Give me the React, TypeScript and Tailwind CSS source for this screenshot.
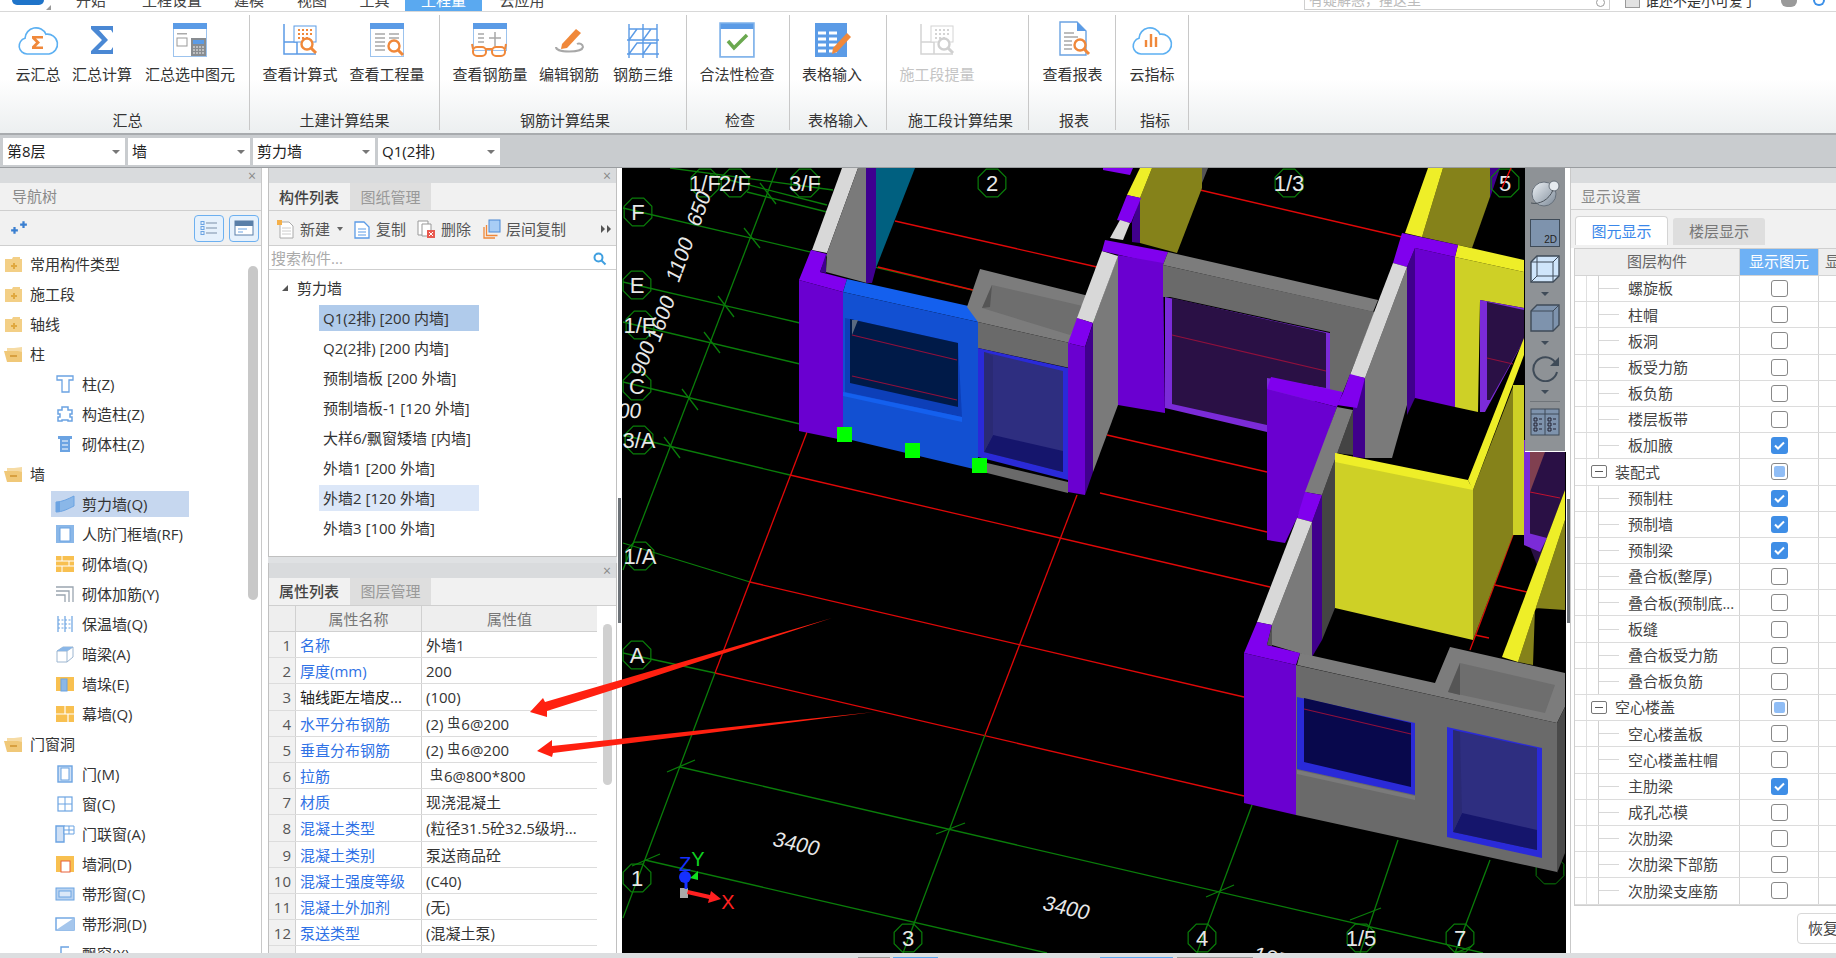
import type { ReactNode } from "react";

const BLUE = "#5b9be6";
const ORANGE = "#f0883a";

// ribbon icons, all in a 40x38 box
const Lens = ({ x, y, c = ORANGE }: { x: number; y: number; c?: string }) => (
  <g fill="none" stroke={c} strokeWidth="2.4">
    <circle cx={x} cy={y} r="5.5" fill="#fff" />
    <path d={`M${x + 4} ${y + 4}l5 5`} strokeWidth="3" />
  </g>
);

const Win = ({ h = 33 }: { h?: number }) => (
  <>
    <rect x="3.5" y="3.5" width="33" height={h} fill="#fff" stroke="#9cc3ee" />
    <rect x="3" y="3" width="34" height="6" fill={BLUE} />
  </>
);

const Cloud = ({ children }: { children?: ReactNode }) => (
  <svg width="42" height="38" viewBox="0 0 42 38">
    <path d="M10 34a8 8 0 0 1-2-15.700a11 11 0 0 1 21-4a9.500 9.500 0 0 1 3 19.700z" fill="none" stroke="#5cb0f2" strokeWidth="1.600" />
    {children}
  </svg>
);

const ribbonIcons: Record<string, ReactNode> = {
  cloudSum: (
    <Cloud>
      <path d="M15 16h11v2.500h-7l4 4-4 4h7v2.500h-11v-2.500l4-4-4-4z" fill={ORANGE} />
    </Cloud>
  ),
  sigma: (
    <svg width="40" height="38" viewBox="0 0 40 38">
      <path d="M9 6h22v7l-2-3H17l9 10-10 10h13l2-3v7H9v-3l11-11L9 9z" fill="#4a88d4" />
    </svg>
  ),
  winCalc: (
    <svg width="40" height="38" viewBox="0 0 40 38">
      <Win />
      <rect x="7" y="18" width="10" height="8" fill="none" stroke="#999" />
      <rect x="7" y="13" width="10" height="1.500" fill="#aaa" />
      <rect x="21" y="18" width="15" height="18" fill="#888c90" />
      <rect x="23" y="20" width="11" height="4" fill={BLUE} />
      <path d="M23 27h11M23 30h11M23 33h11" stroke="#eee" strokeDasharray="2 1" />
    </svg>
  ),
  calcFormula: (
    <svg width="40" height="38" viewBox="0 0 40 38">
      <path d="M4 4v30h32M4 22h13v12" fill="none" stroke={BLUE} strokeWidth="1.500" />
      <rect x="14" y="6" width="22" height="16" fill="#fff" stroke={BLUE} />
      <path d="M18 10h14M18 14h14M18 18h10" stroke={ORANGE} strokeWidth="2" strokeDasharray="2 2" />
      <Lens x={27} y={24} />
    </svg>
  ),
  qty: (
    <svg width="40" height="38" viewBox="0 0 40 38">
      <Win />
      <path d="M8 14h10M8 18h10M8 22h10M8 26h10M8 30h10M22 14h10M22 18h10" stroke="#a8a8a8" strokeWidth="1.500" />
      <Lens x={27} y={26} />
    </svg>
  ),
  glasses: (
    <svg width="40" height="38" viewBox="0 0 40 38">
      <Win h={27} />
      <path d="M8 14h6M8 18h6M8 22h6M25 12v14M19 18h12" stroke="#a8a8a8" strokeWidth="1.500" />
      <g fill="none" stroke={ORANGE} strokeWidth="2">
        <rect x="3" y="27" width="13" height="9" rx="4" />
        <rect x="22" y="27" width="13" height="9" rx="4" />
        <path d="M16 29h6M3 29l-1-5M35 29l1-5" />
      </g>
    </svg>
  ),
  edit: (
    <svg width="40" height="38" viewBox="0 0 40 38">
      <path d="M7 27c0 6 26 6 27 0a4 4 0 0 0-6-3" fill="none" stroke="#a8a8a8" strokeWidth="2" />
      <path d="M13 24l14-15 5 4-14 15-6 1z" fill={ORANGE} />
    </svg>
  ),
  rebar3d: (
    <svg width="40" height="38" viewBox="0 0 40 38">
      <g fill="none" stroke={BLUE} strokeWidth="1.400">
        <path d="M6 4v34M20 4v34M34 4v34M6 9l14 0 14 0M4 20h32M4 34h32M6 20l8-11M20 20l8-11M6 34l8-11h20M20 34l8-11" />
      </g>
    </svg>
  ),
  check: (
    <svg width="40" height="38" viewBox="0 0 40 38">
      <Win />
      <rect x="3" y="3" width="34" height="34" fill="none" stroke="#7fb2ea" strokeWidth="1.500" />
      <path d="M11 21l6 7 13-13" fill="none" stroke="#6aa84f" strokeWidth="3.500" />
    </svg>
  ),
  tablePen: (
    <svg width="40" height="38" viewBox="0 0 40 38">
      <rect x="3" y="3" width="32" height="34" fill={BLUE} />
      <path d="M6 13h8M17 13h8M6 19h8M17 19h8M6 25h8M17 25h8M6 31h8M17 31h8" stroke="#fff" strokeWidth="3" />
      <path d="M20 34l1-6 14-15 4 4-14 15z" fill={ORANGE} />
    </svg>
  ),
  disabled: (
    <svg width="40" height="38" viewBox="0 0 40 38">
      <path d="M4 4v30h32M4 22h13v12" fill="none" stroke="#d4d4d4" strokeWidth="1.500" />
      <rect x="14" y="6" width="22" height="16" fill="#fff" stroke="#d4d4d4" />
      <path d="M18 10h14M18 14h14M18 18h10" stroke="#d4d4d4" strokeWidth="2" strokeDasharray="2 2" />
      <Lens x={27} y={24} c="#d0d0d0" />
    </svg>
  ),
  report: (
    <svg width="40" height="38" viewBox="0 0 40 38">
      <path d="M7 2h17l9 9v24H7z" fill="#fff" stroke="#6ba3e2" strokeWidth="1.400" />
      <path d="M24 2l9 9h-9z" fill={BLUE} />
      <path d="M11 13h10M11 17h14M11 21h8M11 25h8M11 29h8" stroke="#a8a8a8" strokeWidth="1.400" />
      <Lens x={27} y={25} />
    </svg>
  ),
  cloudBars: (
    <Cloud>
      <path d="M15 20v7M20 14v13M25 17v10" stroke={ORANGE} strokeWidth="2.400" />
    </Cloud>
  ),
};

const ribbon = [
  { w: 250, pl: 8, lx: 6, label: "汇总", items: [["云汇总", 60, "cloudSum"], ["汇总计算", 68, "sigma"], ["汇总选中图元", 108, "winCalc"]] },
  { w: 190, pl: 4, lx: 0, label: "土建计算结果", items: [["查看计算式", 92, "calcFormula"], ["查看工程量", 82, "qty"]] },
  { w: 247, pl: 8, lx: 4, label: "钢筋计算结果", items: [["查看钢筋量", 84, "glasses"], ["编辑钢筋", 74, "edit"], ["钢筋三维", 74, "rebar3d"]] },
  { w: 103, pl: 0, lx: 4, label: "检查", items: [["合法性检查", 100, "check"]] },
  { w: 97, pl: 0, lx: 0, label: "表格输入", items: [["表格输入", 84, "tablePen"]] },
  { w: 142, pl: 0, lx: 6, label: "施工段计算结果", items: [["施工段提量", 100, "disabled"]] },
  { w: 87, pl: 0, lx: 4, label: "报表", items: [["查看报表", 87, "report"]] },
  { w: 73, pl: 0, lx: 6, label: "指标", items: [["云指标", 72, "cloudBars"]] },
] as { w: number; pl: number; lx: number; label: string; items: [string, number, string][] }[];

const tabs: [string, number][] = [
  ["开始", 70],
  ["工程设置", 92],
  ["建模", 62],
  ["视图", 64],
  ["工具", 61],
  ["工程量", 77],
  ["云应用", 80],
];

const TopBar = () => (
  <div className="flex h-[12px] shrink-0 overflow-hidden border-b border-[#d8d8d8] bg-white text-[15px] leading-none text-[#444]">
    <div className="relative h-full w-[56px] shrink-0">
      <div className="ml-[12px] h-[5px] w-[32px] rounded-b-[6px] bg-[#1f74c9]" />
      <div className="absolute bottom-[1px] right-[5px] h-0 w-0 border-b-[5px] border-l-[5px] border-b-[#999] border-l-transparent" />
    </div>
    {tabs.map(([t, w]) => (
      <div
        key={t}
        style={{ width: w }}
        className={`flex h-full shrink-0 items-end justify-center pb-[3px] ${t === "工程量" ? "bg-[#5aa9f0] text-white" : ""}`}
      >
        <span className="whitespace-nowrap">{t}</span>
      </div>
    ))}
    <div className="ml-[742px] flex h-[10px] w-[306px] shrink-0 items-end justify-between border border-t-0 border-[#cfcfcf] px-[4px] pb-[2px] text-[14px] text-[#bbb]">
      <span>有疑解惑，撞这里</span>
      <span className="h-[9px] w-[9px] rounded-full border border-[#999]" />
    </div>
    <div className="ml-[15px] h-[8px] w-[15px] shrink-0 border border-t-0 border-[#9a9a9a] bg-[#e2e2e2]" />
    <div className="ml-[5px] flex h-full w-[116px] shrink-0 items-end pb-[3px] text-[14px] text-[#333]">
      <span className="whitespace-nowrap">谁还不是小可爱了</span>
    </div>
    <div className="ml-[20px] h-[7px] w-[16px] shrink-0 rounded-b-[6px] bg-[#9a9a9a]" />
    <div className="ml-[16px] h-[6px] w-[12px] shrink-0 rounded-b-full border-[2px] border-t-0 border-[#3a8fe8]" />
  </div>
);

const Ribbon = () => (
  <div className="flex h-[123px] shrink-0 border-b-[2px] border-[#a8abae] bg-gradient-to-b from-white from-55% to-[#eceff0]">
    {ribbon.map((g) => (
      <div
        key={g.label}
        style={{ width: g.w, paddingLeft: g.pl }}
        className="mt-[3px] flex h-[115px] shrink-0 flex-col justify-between border-r border-[#c8c8c8]"
      >
        <div className="flex pt-[5px]">
          {g.items.map(([t, w, icon]) => (
            <div key={t} style={{ width: w }} className="flex shrink-0 flex-col items-center">
              <div className="flex h-[38px] items-center justify-center">{ribbonIcons[icon]}</div>
              <div className={`mt-[6px] whitespace-nowrap text-[15px] leading-[20px] ${icon === "disabled" ? "text-[#c4c4c4]" : "text-[#333]"}`}>{t}</div>
            </div>
          ))}
        </div>
        <div className="text-center text-[15px] leading-[19px] text-[#333]" style={{ marginLeft: -g.pl, paddingLeft: g.lx }}>
          {g.label}
        </div>
      </div>
    ))}
  </div>
);

const ComboBar = () => (
  <div className="flex h-[33px] shrink-0 items-start gap-[3px] border-b border-[#9a9da0] bg-[#c9cccf] pl-[3px] pt-[3px]">
    {["第8层", "墙", "剪力墙", "Q1(2排)"].map((t) => (
      <div key={t} className="flex h-[27px] w-[122px] items-center justify-between bg-white pl-[4px] pr-[5px] text-[15px] text-[#222]">
        <span>{t}</span>
        <span className="h-0 w-0 border-x-[4px] border-t-[4px] border-x-transparent border-t-[#777]" />
      </div>
    ))}
  </div>
);

const PanelClose = () => (
  <div className="flex h-[15px] shrink-0 items-center justify-end bg-[#d9dbdd] pr-[5px] text-[14px] leading-none text-[#888]">×</div>
);

// nav tree icons
const I = ({ children }: { children: ReactNode }) => (
  <svg width="20" height="20" viewBox="0 0 20 20" className="shrink-0">
    {children}
  </svg>
);
const L = "#6ba3e2";
const Y = "#f8c050";

const navIcons: Record<string, ReactNode> = {
  closed: (
    <I>
      <path d="M1 5h7l1-2h7v2h2v13H1z" fill="#f3cf86" />
      <path d="M9 9h2v2h2v2h-2v2H9v-2H7v-2h2z" fill="#e0a840" />
    </I>
  ),
  open: (
    <I>
      <path d="M3 4h7l8-1v13l-15 2z" fill="#f6dba4" />
      <path d="M0 7h14l4 1v10H3z" fill="#f0c878" />
      <rect x="6" y="11" width="7" height="2" fill="#d8a040" />
    </I>
  ),
  col: (
    <I>
      <path d="M2 2h16v4h-4v12H7V6H2z" fill="#fff" stroke={L} strokeWidth="1.300" />
    </I>
  ),
  gz: (
    <I>
      <path d="M7 3h6v3h4v4h-2v3h2v4h-4v-1H7v1H3v-4h2v-3H3V6h4z" fill="#fff" stroke={L} strokeWidth="1.500" />
    </I>
  ),
  brickCol: (
    <I>
      <path d="M3 2h14v3h-2v13H5V5H3z" fill={L} />
      <path d="M7 7h6M7 11h6M7 15h6" stroke="#fff" />
    </I>
  ),
  shear: (
    <I>
      <path d="M1 8c6 0 12-3 18-6v10c-6 3-12 6-18 6z" fill="#8ab7e8" stroke={L} />
      <path d="M1 8v10h4V8z" fill={L} />
    </I>
  ),
  rf: (
    <I>
      <rect x="1" y="1" width="18" height="18" fill="#8ab7e8" />
      <rect x="5" y="4" width="10" height="13" fill="#fff" stroke={L} />
    </I>
  ),
  brick: (
    <I>
      <rect x="1" y="2" width="18" height="16" fill={Y} />
      <path d="M1 7h18M1 12h18M7 2v5M14 7v5M7 12v6" stroke="#fff" />
    </I>
  ),
  rebar: (
    <I>
      <path d="M1 3h17v15M1 7h13v11M1 11h9v7" fill="none" stroke="#9aa5b0" strokeWidth="1.300" />
    </I>
  ),
  ins: (
    <I>
      <path d="M3 2v16M17 2v16M10 2v16" stroke={L} strokeWidth="1.200" />
      <path d="M3 6h14M3 10h14M3 14h14" stroke={L} strokeDasharray="2 1.500" />
    </I>
  ),
  beam: (
    <I>
      <path d="M2 7l6-4h10v10l-6 5H2z" fill="#fff" stroke="#9db6d0" />
      <path d="M2 7h10v11M12 7l6-4" fill="none" stroke="#9db6d0" />
      <path d="M8 3h10l-6 4H2z" fill="#8ab7e8" />
    </I>
  ),
  pier: (
    <I>
      <rect x="1" y="3" width="18" height="14" fill={Y} />
      <rect x="6" y="5" width="6" height="12" fill="#8ab7e8" stroke={L} />
    </I>
  ),
  curtain: (
    <I>
      <rect x="1" y="2" width="18" height="16" fill={Y} />
      <path d="M1 10h18M10 2v8M13 10v8" stroke="#fff" strokeWidth="1.200" />
    </I>
  ),
  door: (
    <I>
      <rect x="3" y="2" width="14" height="16" fill="#cfe0f5" stroke={L} strokeWidth="1.400" />
      <rect x="6" y="4" width="8" height="12" fill="#fff" stroke={L} />
    </I>
  ),
  window: (
    <I>
      <rect x="3" y="3" width="14" height="14" fill="#fff" stroke={L} strokeWidth="1.200" />
      <path d="M10 3v14M3 10h14" stroke={L} />
    </I>
  ),
  doorWin: (
    <I>
      <path d="M1 2h8v16H1z" fill="#cfe0f5" stroke={L} strokeWidth="1.400" />
      <path d="M9 2h10v8H9zM14 2v8M9 6h10" fill="#fff" stroke={L} />
    </I>
  ),
  hole: (
    <I>
      <rect x="1" y="2" width="18" height="16" fill={Y} />
      <rect x="6" y="7" width="9" height="11" fill="#fff" stroke="#e8603a" />
    </I>
  ),
  strip: (
    <I>
      <rect x="1" y="4" width="18" height="12" fill="#b8d2f0" stroke={L} />
      <rect x="4" y="7" width="12" height="6" fill="#dbe8f8" stroke={L} />
    </I>
  ),
  stripHole: (
    <I>
      <rect x="1" y="4" width="18" height="12" fill="#fff" stroke={L} strokeWidth="1.400" />
      <path d="M1 16L19 4v12z" fill="#a5c6ec" />
    </I>
  ),
  bay: (
    <I>
      <path d="M6 18V3h8" fill="none" stroke={L} strokeWidth="1.400" />
    </I>
  ),
};

const navItems: [string, string, boolean][] = [
  ["常用构件类型", "closed", false],
  ["施工段", "closed", false],
  ["轴线", "closed", false],
  ["柱", "open", false],
  ["柱(Z)", "col", true],
  ["构造柱(Z)", "gz", true],
  ["砌体柱(Z)", "brickCol", true],
  ["墙", "open", false],
  ["剪力墙(Q)", "shear", true],
  ["人防门框墙(RF)", "rf", true],
  ["砌体墙(Q)", "brick", true],
  ["砌体加筋(Y)", "rebar", true],
  ["保温墙(Q)", "ins", true],
  ["暗梁(A)", "beam", true],
  ["墙垛(E)", "pier", true],
  ["幕墙(Q)", "curtain", true],
  ["门窗洞", "open", false],
  ["门(M)", "door", true],
  ["窗(C)", "window", true],
  ["门联窗(A)", "doorWin", true],
  ["墙洞(D)", "hole", true],
  ["帯形窗(C)", "strip", true],
  ["帯形洞(D)", "stripHole", true],
  ["飘窗(X)", "bay", true],
];

const NavPanel = () => (
  <div className="flex h-full w-[262px] shrink-0 flex-col overflow-hidden border-r border-[#c9c9c9] bg-white">
    <PanelClose />
    <div className="flex h-[28px] shrink-0 items-center border-b border-[#cfcfcf] bg-[#f1f1f1] pl-[12px] text-[15px] text-[#8a8a8a]">导航树</div>
    <div className="flex h-[35px] shrink-0 items-center border-b border-[#cfcfcf] bg-[#f1f1f1] pl-[10px]">
      <svg width="18" height="16" viewBox="0 0 16 14">
        <path d="M3 6h2v2h2v2H5v2H3v-2H1V8h2zM11 1h2v2h2v2h-2v2h-2V5H9V3h2z" fill="#3a7fd0" />
      </svg>
      <div className="ml-auto mr-[2px] flex gap-[5px]">
        <div className="flex h-[27px] w-[30px] items-center justify-center rounded-[4px] border-[1.500px] border-[#6db0f0] bg-[#e6f1fc]">
          <svg width="18" height="16" viewBox="0 0 18 16">
            <path d="M6 3h11M6 8h11M6 13h11" stroke="#7b8fa8" />
            <rect x="1" y="1.500" width="3" height="3" fill="none" stroke="#6ba3e2" />
            <rect x="1" y="6.500" width="3" height="3" fill="none" stroke="#6ba3e2" />
            <rect x="1" y="11.500" width="3" height="3" fill="none" stroke="#6ba3e2" />
          </svg>
        </div>
        <div className="flex h-[27px] w-[30px] items-center justify-center rounded-[4px] border-[1.500px] border-[#6db0f0] bg-[#e6f1fc]">
          <svg width="20" height="16" viewBox="0 0 20 16">
            <rect x="1" y="1" width="18" height="14" fill="#fff" stroke="#5a7fa8" />
            <rect x="1" y="1" width="18" height="5" fill="#5a7fa8" />
            <path d="M4 9h9M4 12h5" stroke="#6ba3e2" />
          </svg>
        </div>
      </div>
    </div>
    <div className="relative min-h-0 flex-1 overflow-hidden pt-[3px]">
      {navItems.map(([t, icon, child]) =>
        child ? (
          <div key={t} className="flex h-[30px] items-center pl-[51px] text-[15px] text-[#333]">
            <div className={`flex h-[26px] w-[138px] items-center pl-[4px] ${t === "剪力墙(Q)" ? "bg-[#c6d7ef]" : ""}`}>
              {navIcons[icon]}
              <span className="ml-[7px] whitespace-nowrap">{t}</span>
            </div>
          </div>
        ) : (
          <div key={t} className="flex h-[30px] items-center pl-[4px] text-[15px] text-[#333]">
            {navIcons[icon]}
            <span className="ml-[6px]">{t}</span>
          </div>
        ),
      )}
      <div className="absolute left-[248px] top-[20px] h-[334px] w-[10px] rounded-full bg-[#c8c8c8]" />
    </div>
  </div>
);

const members = [
  "Q1(2排) [200 内墙]",
  "Q2(2排) [200 内墙]",
  "预制墙板 [200 外墙]",
  "预制墙板-1 [120 外墙]",
  "大样6/飘窗矮墙 [内墙]",
  "外墙1 [200 外墙]",
  "外墙2 [120 外墙]",
  "外墙3 [100 外墙]",
];

const PanelTabs = ({ active, other, low }: { active: string; other: string; low?: boolean }) => (
  <div className="flex h-[28px] shrink-0 items-end border-b border-[#cfcfcf] bg-[#f1f1f1]">
    <div className={`flex h-[27px] w-[80px] items-center justify-center text-[15px] font-medium text-[#444] ${low ? "pt-[2px]" : ""}`}>{active}</div>
    <div className={`ml-[1px] flex h-[27px] w-[81px] items-center justify-center bg-[#dedede] text-[15px] text-[#999] ${low ? "pt-[2px]" : ""}`}>{other}</div>
  </div>
);

const MemberPanel = () => (
  <div className="flex h-[389px] shrink-0 flex-col overflow-hidden border-x border-b border-[#c0c0c0] bg-white">
    <PanelClose />
    <PanelTabs active="构件列表" other="图纸管理" low />
    <div className="flex h-[35px] shrink-0 items-center border-b border-[#cfcfcf] bg-[#f1f1f1] pl-[8px] pt-[2px] text-[15px] text-[#555]">
      <svg width="18" height="20" viewBox="0 0 18 20">
        <path d="M3 3h9l4 4v12H3z" fill="#fff" stroke="#aaa" />
        <path d="M5 9h9M5 12h9M5 15h9" stroke="#ccc" />
        <rect x="0" y="1" width="5" height="5" fill="#f5b04a" />
      </svg>
      <span className="ml-[5px]">新建</span>
      <span className="ml-[7px] h-0 w-0 border-x-[3.500px] border-t-[4px] border-x-transparent border-t-[#666]" />
      <svg className="ml-[11px]" width="16" height="20" viewBox="0 0 16 20">
        <path d="M1 3h9l5 5v11H1z" fill="#fff" stroke="#5b9be6" strokeWidth="1.300" />
        <path d="M4 10h8M4 13h8M4 16h8" stroke="#5b9be6" />
      </svg>
      <span className="ml-[6px]">复制</span>
      <svg className="ml-[11px]" width="19" height="20" viewBox="0 0 19 20">
        <path d="M1 2h10v14H1z" fill="#fff" stroke="#999" />
        <path d="M5 5h9v12H5z" fill="#fff" stroke="#999" />
        <rect x="10" y="11" width="8" height="8" fill="#e85a50" />
        <path d="M12 13l4 4M16 13l-4 4" stroke="#fff" />
      </svg>
      <span className="ml-[5px]">删除</span>
      <svg className="ml-[12px]" width="18" height="20" viewBox="0 0 18 20">
        <path d="M1 8v11h11M3.500 6v10.500h11" fill="none" stroke={ORANGE} strokeWidth="1.300" />
        <rect x="6" y="1" width="11" height="12" fill="#a8cdf5" stroke="#4a88d4" />
      </svg>
      <span className="ml-[5px]">层间复制</span>
      <svg className="ml-auto mr-[5px]" width="10" height="8" viewBox="0 0 10 8">
        <path d="M0 0l4 4-4 4zM6 0l4 4-4 4z" fill="#555" />
      </svg>
    </div>
    <div className="flex h-[24px] shrink-0 items-center justify-between border-b border-[#cfcfcf] pl-[2px] pr-[9px] pt-[2px] text-[15px] text-[#aaa]">
      <span>搜索构件...</span>
      <svg width="14" height="14" viewBox="0 0 14 14">
        <circle cx="5.500" cy="5.500" r="4" fill="none" stroke="#3f9fe0" strokeWidth="2" />
        <path d="M8.500 8.500l4 4" stroke="#3f9fe0" strokeWidth="2" />
      </svg>
    </div>
    <div className="min-h-0 flex-1 pt-[3px] text-[15px] text-[#333]">
      <div className="flex h-[30px] items-center pl-[13px]">
        <span className="h-0 w-0 border-b-[6px] border-l-[6px] border-b-[#555] border-l-transparent" />
        <span className="ml-[9px]">剪力墙</span>
      </div>
      {members.map((m, i) => (
        <div key={m} className="flex h-[30px] items-center pl-[50px]">
          <div className={`flex h-[26px] w-[160px] items-center whitespace-nowrap pl-[4px] ${i === 0 ? "bg-[#b0cbeb]" : i === 6 ? "bg-[#dce7f8]" : ""}`}>{m}</div>
        </div>
      ))}
    </div>
  </div>
);

const Rebar = () => <span className="mr-[1px] align-[3px] text-[13px] leading-none">虫</span>;

const props: [string, ReactNode, boolean][] = [
  ["名称", "外墙1", true],
  ["厚度(mm)", "200", true],
  ["轴线距左墙皮...", "(100)", false],
  ["水平分布钢筋", <>(2) <Rebar />6@200</>, true],
  ["垂直分布钢筋", <>(2) <Rebar />6@200</>, true],
  ["拉筋", <>&nbsp;<Rebar />6@800*800</>, true],
  ["材质", "现浇混凝土", true],
  ["混凝土类型", "(粒径31.5砼32.5级坍...", true],
  ["混凝土类别", "泵送商品砼", true],
  ["混凝土强度等级", "(C40)", true],
  ["混凝土外加剂", "(无)", true],
  ["泵送类型", "(混凝土泵)", true],
  ["", "", false],
];

const PropPanel = () => (
  <div className="flex min-h-0 flex-1 flex-col overflow-hidden border-x border-[#c0c0c0] bg-white">
    <PanelClose />
    <PanelTabs active="属性列表" other="图层管理" />
    <div className="relative flex min-h-0 flex-1 overflow-hidden">
      <div className="w-[328px] shrink-0 text-[15px]">
        <div className="flex h-[26px] border-b border-[#d0d0d0] bg-[#eeeeee] text-[#777]">
          <div className="w-[27px] shrink-0 border-r border-[#d0d0d0]" />
          <div className="w-[126px] shrink-0 border-r border-[#d0d0d0] text-center leading-[26px]">属性名称</div>
          <div className="w-[175px] shrink-0 text-center leading-[26px]">属性值</div>
        </div>
        {props.map(([name, value, link], i) => (
          <div key={i} className="flex h-[26.200px] overflow-hidden border-b border-[#dcdcdc] leading-[27px]">
            <div className="w-[27px] shrink-0 border-r border-[#d0d0d0] bg-[#f1f1f1] pr-[4px] text-right text-[#555]">{name ? i + 1 : ""}</div>
            <div className={`w-[126px] shrink-0 truncate border-r border-[#d0d0d0] pl-[4px] ${link ? "text-[#2f72e6]" : "text-[#222]"}`}>{name}</div>
            <div className="w-[175px] shrink-0 whitespace-nowrap pl-[4px] text-[#333]">{value}</div>
          </div>
        ))}
      </div>
      <div className="absolute left-[334px] top-[18px] h-[161px] w-[9px] rounded-full bg-[#d0d0d0]" />
    </div>
  </div>
);

// 3D view, coordinates are page pixels
const polys: [string, string][] = [
  // far left wall
  ["812,250 827,253 858,168 842,168", "#d8d8d8"],
  ["826,272 867,283 867,168 858,168 827,253", "#7a7a7a"],
  ["866,168 876,168 876,268 872,283 866,283", "#3f0090"],
  ["876,168 915,168 876,268", "#006080"],
  // purple corner
  ["799,280 811,250 827,254 820,272 847,279 843,292", "#8000ee"],
  ["820,272 826,273 826,254", "#40008c"],
  ["799,280 843,292 843,440 799,431", "#6a00d0"],
  // selected blue wall
  ["847,279 982,309 978,322 843,292", "#1460ee"],
  ["843,292 978,322 978,470 843,438", "#1250d2"],
  ["845,318 958,343 962,417 845,392", "#0d3fb8"],
  ["850,319 958,343 958,407 850,383", "#001a48"],
  ["852,320 858,320 852,335", "#5a6a80"],
  ["843,392 962,417 962,422 843,396", "#1460ee"],
  // gray section
  ["967,307 980,269 1093,297 1070,343 978,322", "#7c7c7c"],
  ["982,308 992,285 1087,307 1070,335", "#6e6e6e"],
  ["982,308 992,285 990,307", "#555"],
  ["978,322 1070,343 1070,368 978,348", "#6a6a6a"],
  ["978,348 1068,368 1068,480 978,457", "#2a2ad8"],
  ["984,352 1063,371 1063,472 984,452", "#2e2e80"],
  ["993,435 1063,451 1063,472 984,452", "#15156c"],
  ["984,352 993,356 993,435 984,452", "#2a2a74"],
  ["987,463 1068,482 1068,493 987,473", "#6a6a6a"],
  // pillar and next wall
  ["1093,323 1118,255 1118,405 1093,472", "#7a7a7a"],
  ["1077,318 1093,323 1118,256 1102,251", "#d8d8d8"],
  ["1077,318 1093,323 1085,347 1068,343", "#8000ee"],
  ["1068,343 1085,347 1085,495 1068,492", "#6a00d0"],
  ["1085,347 1093,323 1093,472 1085,495", "#40008c"],
  // mid upper wall
  ["1103,168 1133,168 1130,175 1103,170", "#8000ee"],
  ["1140,198 1152,168 1202,168 1202,188 1177,253 1140,243", "#85821a"],
  ["1202,168 1208,168 1202,183", "#555"],
  ["1127,195 1140,168 1152,168 1140,198", "#eeee28"],
  ["1132,222 1140,198 1140,243 1132,242", "#40008c"],
  ["1117,220 1127,195 1141,198 1131,223", "#8000ee"],
  ["1110,238 1120,220 1130,223 1123,240", "#d8d8d8"],
  ["1105,240 1168,252 1163,265 1102,251", "#8000ee"],
  ["1118,255 1163,263 1165,413 1118,405", "#6a00d0"],
  ["1168,252 1378,300 1373,312 1163,265", "#7c7c7c"],
  ["1163,265 1375,312 1343,392 1330,392 1330,332 1170,297 1163,297", "#6a6a6a"],
  ["1165,297 1330,333 1330,392 1267,432 1165,408", "#7b2bd8"],
  ["1172,298 1326,333 1326,388 1267,378 1267,425 1172,404", "#2a1045"],
  // purple fin
  ["1271,377 1343,392 1337,407 1267,389", "#8000ee"],
  ["1267,389 1337,407 1307,493 1297,518 1285,543 1267,540", "#6a00d0"],
  // upper right
  ["1422,237 1443,168 1490,168 1490,197 1472,248", "#85821a"],
  ["1405,233 1428,168 1443,168 1422,237", "#eeee28"],
  ["1490,168 1500,168 1490,198", "#40008c"],
  ["1455,257 1524,272 1524,308 1480,300 1478,412 1455,407", "#ced026"],
  ["1480,300 1524,308 1524,340 1485,412 1480,412", "#7b2bd8"],
  ["1487,302 1524,310 1524,340 1490,400 1487,400", "#2a1045"],
  ["1458,245 1524,260 1524,272 1455,257", "#eeee28"],
  ["1415,248 1455,257 1455,407 1415,398", "#6a00d0"],
  ["1407,267 1415,248 1415,398 1407,415", "#40008c"],
  ["1402,233 1458,245 1455,257 1415,248 1407,267 1393,263", "#8000ee"],
  // long wall
  ["1365,378 1407,267 1407,405 1392,458 1365,458", "#7a7a7a"],
  ["1353,408 1365,378 1365,458 1353,457", "#40008c"],
  ["1350,375 1365,378 1407,267 1393,263", "#d8d8d8"],
  ["1343,393 1350,374 1365,378 1357,408 1337,405", "#8000ee"],
  ["1322,495 1353,410 1353,455 1335,453 1335,608 1322,640", "#444"],
  ["1337,407 1353,410 1322,495 1305,492", "#7c7c7c"],
  ["1312,522 1322,495 1322,640 1312,657", "#40008c"],
  ["1312,522 1312,657 1272,645 1272,625", "#7a7a7a"],
  ["1297,518 1305,492 1322,495 1312,522", "#8000ee"],
  ["1297,518 1312,522 1272,625 1257,622", "#d8d8d8"],
  // back right window under the toolbar
  ["1524,452 1565,452 1565,490 1537,565 1524,532", "#2a1045"],
  ["1524,532 1547,538 1540,552 1524,545", "#7b2bd8"],
  ["1529,452 1545,452 1530,492", "#804050"],
  // yellow walls
  ["1473,490 1513,387 1513,535 1473,640", "#85821a"],
  ["1513,385 1524,385 1524,535 1513,535", "#ced026"],
  ["1524,440 1530,440 1530,540 1524,540", "#7b2bd8"],
  ["1335,453 1473,485 1473,640 1335,608", "#ced026"],
  ["1335,453 1468,480 1473,490 1335,462", "#eeee28"],
  ["1468,480 1524,338 1524,355 1473,490", "#eeee28"],
  ["1518,662 1565,520 1565,610 1535,608 1533,665", "#85821a"],
  ["1502,657 1565,490 1565,520 1518,662", "#eeee28"],
  // bottom building
  ["1300,653 1435,683 1450,647 1565,673 1565,707 1557,723 1297,665", "#7c7c7c"],
  ["1448,692 1460,663 1555,685 1545,713", "#6e6e6e"],
  ["1448,692 1460,663 1460,695", "#555"],
  ["1296,665 1557,723 1557,872 1296,815", "#6a6a6a"],
  ["1557,723 1565,707 1565,853 1557,873", "#4a4a4a"],
  ["1297,697 1415,723 1415,795 1297,769", "#2a2ad8"],
  ["1304,698 1411,723 1411,787 1304,762", "#08084c"],
  ["1297,770 1415,796 1415,800 1297,774", "#7a7a7a"],
  ["1447,727 1542,748 1542,858 1447,837", "#2a2ad8"],
  ["1453,730 1537,748 1537,850 1453,832", "#2e2e80"],
  ["1462,813 1537,830 1537,850 1453,832", "#15156c"],
  ["1453,730 1460,732 1462,813 1453,832", "#2a2a74"],
  ["1244,653 1257,622 1272,625 1267,645 1300,653 1296,665", "#8000ee"],
  ["1267,645 1272,625 1272,646", "#555"],
  ["1244,653 1296,665 1296,815 1244,803", "#6a00d0"],
];

const green = "#0a7d0a";
const red = "#e00808";
const gridLines: [number, number, number, number, string][] = [
  [623, 208, 1100, 320, green],
  [623, 282, 800, 323, green],
  [623, 322, 800, 364, green],
  [623, 382, 800, 424, green],
  [623, 435, 790, 475, green],
  [790, 475, 1270, 587, red],
  [623, 543, 750, 582, green],
  [750, 582, 1244, 697, red],
  [623, 653, 715, 673, green],
  [715, 673, 1244, 796, red],
  [680, 767, 1483, 953, green],
  [645, 860, 1047, 953, green],
  [670, 168, 833, 190, green],
  [710, 175, 827, 205, green],
  [747, 192, 827, 212, green],
  [895, 221, 1097, 267, red],
  [878, 267, 973, 290, red],
  [1200, 190, 1402, 237, red],
  [1107, 435, 1267, 472, red],
  [1100, 493, 1267, 532, red],
  [1495, 585, 1527, 592, red],
  [1511, 168, 1502, 188, red],
  // crossing lines
  [777, 168, 623, 570, green],
  [807, 432, 715, 673, red],
  [715, 673, 623, 918, green],
  [1077, 495, 985, 735, red],
  [985, 735, 903, 953, green],
  [1252, 805, 1197, 953, green],
  [1398, 840, 1360, 953, green],
  [1490, 860, 1455, 953, green],
  [1513, 535, 1470, 650, red],
  [1475, 635, 1489, 638, red],
  // ticks
  [744, 228, 760, 248, green],
  [718, 296, 734, 317, green],
  [704, 332, 720, 353, green],
  [682, 389, 698, 410, green],
  [664, 437, 680, 458, green],
  [760, 183, 776, 204, green],
  [667, 772, 695, 760, green],
  [632, 866, 660, 854, green],
  [936, 834, 965, 823, green],
  [1206, 897, 1234, 885, green],
  [1350, 920, 1381, 908, green],
  [1444, 958, 1472, 946, green],
];

const axes: [string, number, number][] = [
  ["F", 638, 212],
  ["E", 637, 285],
  ["1/E", 640, 325],
  ["C", 637, 386],
  ["3/A", 639, 440],
  ["1/A", 640, 556],
  ["A", 637, 655],
  ["1", 637, 878],
  ["3", 908, 938],
  ["2", 992, 183],
  ["3/F", 805, 183],
  ["2/F", 735, 183],
  ["1/F", 705, 183],
  ["1/3", 1289, 183],
  ["5", 1505, 183],
  ["4", 1202, 938],
  ["1/5", 1361, 938],
  ["7", 1460, 938],
];

const dims: [string, number, number, number][] = [
  ["3400", 797, 843, 13],
  ["3400", 1067, 907, 13],
  ["1850", 1277, 958, 13],
  ["1100", 679, 259, -70],
  ["1600", 660, 318, -70],
  ["900", 642, 358, -70],
  ["650", 698, 208, -70],
  ["00", 630, 410, 0],
];

const octagon = (cx: number, cy: number) =>
  Array.from({ length: 8 }, (_, i) => {
    const a = ((i + 0.5) * Math.PI) / 4;
    return `${cx + 15 * Math.cos(a)},${cy + 15 * Math.sin(a)}`;
  }).join(" ");

const ViewToolbar = () => (
  <div className="absolute right-0 top-0 flex h-[284px] w-[41px] flex-col items-center border-b border-r border-white bg-[#8e9296] pt-[10px]">
    <svg width="32" height="30" viewBox="0 0 32 30">
      <defs>
        <linearGradient id="ball" x1="0" y1="0" x2="1" y2="1">
          <stop offset="0" stopColor="#eef2f6" />
          <stop offset="1" stopColor="#7d8a98" />
        </linearGradient>
      </defs>
      <circle cx="15" cy="16" r="12" fill="url(#ball)" stroke="#67707a" />
      <circle cx="25" cy="8" r="5" fill="#e6ebf0" stroke="#67707a" />
      <path d="M2 25c8 2 18-3 22-13" fill="none" stroke="#4a525a" />
    </svg>
    <div className="relative mt-[11px] h-[28px] w-[30px] border-[1.500px] border-[#3f4b58] bg-[#7e93ad]">
      <span className="absolute bottom-[1px] right-[2px] font-['Liberation_Sans',sans-serif] text-[10px] leading-none text-[#222]">2D</span>
    </div>
    <svg className="mt-[8px]" width="30" height="28" viewBox="0 0 30 28">
      <path d="M1 7L7 1h22v20l-6 6H1z" fill="#cfe5fb" stroke="#3f4b58" strokeWidth="1.400" />
      <path d="M1 7h22v20M23 7l6-6M7 1v20h22M7 21l-6 6" fill="none" stroke="#3f4b58" />
    </svg>
    <span className="mt-[9px] h-0 w-0 border-x-[4px] border-t-[4px] border-x-transparent border-t-[#3f4b58]" />
    <svg className="mt-[8px]" width="30" height="28" viewBox="0 0 30 28">
      <path d="M1 7L7 1h22v20l-6 6H1z" fill="#7e93ad" stroke="#3f4b58" strokeWidth="1.400" />
      <path d="M1 7h22v20M23 7l6-6" fill="none" stroke="#3f4b58" />
    </svg>
    <span className="mt-[9px] h-0 w-0 border-x-[4px] border-t-[4px] border-x-transparent border-t-[#3f4b58]" />
    <svg className="mt-[9px]" width="30" height="28" viewBox="0 0 30 28">
      <path d="M25 8a12 12 0 1 0 2 10" fill="none" stroke="#3f4b58" strokeWidth="2" />
      <path d="M29 3v9h-9z" fill="#3f4b58" />
    </svg>
    <span className="mt-[8px] h-0 w-0 border-x-[4px] border-t-[4px] border-x-transparent border-t-[#3f4b58]" />
    <div className="mt-[7px] h-px w-[30px] bg-[#70757a]" />
    <svg className="mt-[6px]" width="30" height="28" viewBox="0 0 30 28">
      <rect x="1" y="1" width="28" height="26" fill="#7e93ad" stroke="#3f4b58" />
      <path d="M15 1v26M1 6h28" stroke="#3f4b58" />
      <path d="M4 10h3v3H4zM4 15h3v3H4zM4 20h3v3H4zM18 10h3v3h-3zM18 15h3v3h-3zM18 20h3v3h-3z" fill="none" stroke="#223" />
      <path d="M9 11h3M9 16h3M9 21h3M23 11h3M23 16h3M23 21h3" stroke="#223" />
    </svg>
  </div>
);

const View3D = () => (
  <div className="relative h-full w-[944px] shrink-0 overflow-hidden bg-black">
    <svg width="944" height="785" viewBox="622 168 944 785" className="block font-['Liberation_Sans',sans-serif]">
      {gridLines.map(([x1, y1, x2, y2, c], i) => (
        <line key={i} x1={x1} y1={y1} x2={x2} y2={y2} stroke={c} strokeWidth="1.300" />
      ))}
      <polygon points={octagon(1550, 870)} fill="none" stroke={green} />
      {polys.map(([p, c], i) => (
        <polygon key={i} points={p} fill={c} />
      ))}
      {/* red lines seen through the windows */}
      <path d="M852 335L957 360M852 376L957 400M1172 335L1326 371M1487 358L1513 364M1304 709L1411 734" stroke="#90103c" strokeWidth="1.200" />
      <path d="M1530 492L1560 498" stroke="#c01030" />
      {[[837, 427], [905, 443], [972, 458]].map(([x, y]) => (
        <rect key={x} x={x} y={y} width="15" height="15" fill="#00ff00" />
      ))}
      {axes.map(([t, x, y]) => (
        <g key={t}>
          <polygon points={octagon(x, y)} fill="none" stroke={green} strokeWidth="1.200" />
          <text x={x} y={y + 8} textAnchor="middle" fontSize="22" fill="#e8e8e8">
            {t}
          </text>
        </g>
      ))}
      <path d="M1511 168L1502 188" stroke={red} />
      {dims.map(([t, x, y, r]) => (
        <text key={t + x} transform={`translate(${x} ${y}) rotate(${r}) skewX(-8)`} textAnchor="middle" y="8" fontSize="21" fill="#e8e8e8">
          {t}
        </text>
      ))}
      {/* axis gizmo */}
      <rect x="680" y="888" width="8" height="10" fill="#aaa" />
      <path d="M686 889v-10" stroke="#1530ff" strokeWidth="3" />
      <circle cx="685" cy="877" r="6" fill="#1530ff" />
      <path d="M690 878l8-7v9z" fill="#10e020" />
      <path d="M688 890l22 5 1-4 10 8-13 4 1-4-22-5z" fill="#ff2020" />
      <text x="685" y="871" textAnchor="middle" fontSize="20" fill="#1530ff">Z</text>
      <text x="698" y="866" textAnchor="middle" fontSize="20" fill="#10d020">Y</text>
      <text x="728" y="909" textAnchor="middle" fontSize="20" fill="#ff2020">X</text>
    </svg>
    <ViewToolbar />
  </div>
);

const layers: [string, number, string][] = [
  ["螺旋板", 1, ""],
  ["柱帽", 1, ""],
  ["板洞", 1, ""],
  ["板受力筋", 1, ""],
  ["板负筋", 1, ""],
  ["楼层板带", 1, ""],
  ["板加腋", 1, "on"],
  ["装配式", 0, "part"],
  ["预制柱", 1, "on"],
  ["预制墙", 1, "on"],
  ["预制梁", 1, "on"],
  ["叠合板(整厚)", 1, ""],
  ["叠合板(预制底...", 1, ""],
  ["板缝", 1, ""],
  ["叠合板受力筋", 1, ""],
  ["叠合板负筋", 1, ""],
  ["空心楼盖", 0, "part"],
  ["空心楼盖板", 1, ""],
  ["空心楼盖柱帽", 1, ""],
  ["主肋梁", 1, "on"],
  ["成孔芯模", 1, ""],
  ["次肋梁", 1, ""],
  ["次肋梁下部筋", 1, ""],
  ["次肋梁支座筋", 1, ""],
];

const Check = ({ state }: { state: string }) => {
  if (state === "on") {
    return (
      <div className="flex h-[17px] w-[17px] items-center justify-center rounded-[3px] bg-[#3f8ee6]">
        <svg width="11" height="9" viewBox="0 0 11 9">
          <path d="M1 4.500l3 3 6-6" fill="none" stroke="#fff" strokeWidth="2" />
        </svg>
      </div>
    );
  }
  if (state === "part") {
    return (
      <div className="flex h-[17px] w-[17px] items-center justify-center rounded-[3px] border border-[#888] bg-white">
        <div className="h-[11px] w-[11px] rounded-[2px] bg-[#90bdf5]" />
      </div>
    );
  }
  return <div className="h-[17px] w-[17px] rounded-[3px] border border-[#888] bg-white" />;
};

const DisplayPanel = () => (
  <div className="flex h-full min-w-0 flex-1 flex-col overflow-hidden border-l border-[#c9c9c9] bg-white">
    <div className="h-[15px] shrink-0 bg-[#d9dbdd]" />
    <div className="flex h-[27px] shrink-0 items-center border-b border-[#cfcfcf] bg-[#f1f1f1] pl-[10px] text-[15px] text-[#8a8a8a]">显示设置</div>
    <div className="flex h-[38px] shrink-0 items-end gap-[5px] bg-[#f1f1f1] pb-[3px] pl-[4px]">
      <div className="flex h-[29px] w-[93px] items-center justify-center rounded-t-[4px] border border-b-0 border-[#d4d4d4] bg-white text-[15px] text-[#3a87ea]">图元显示</div>
      <div className="flex h-[27px] w-[92px] items-center justify-center rounded-t-[3px] bg-[#dedede] text-[15px] text-[#777]">楼层显示</div>
    </div>
    <div className="ml-[3px] shrink-0 border-y border-l border-[#cfcfcf] text-[15px] text-[#444]">
      <div className="flex h-[27px] border-b border-[#d4d4d4] bg-[#eeeeee]">
        <div className="w-[165px] shrink-0 border-r border-[#d4d4d4] text-center leading-[25px] text-[#666]">图层构件</div>
        <div className="w-[79px] shrink-0 border-r border-[#d4d4d4] bg-[#6eb1f5] text-center leading-[25px] text-white">显示图元</div>
        <div className="overflow-hidden whitespace-nowrap pl-[6px] leading-[25px] text-[#666]">显示名称</div>
      </div>
      {layers.map(([t, lvl, state]) => (
        <div key={t} className="flex h-[26.200px] border-b border-[#dcdcdc]">
          <div className="flex w-[165px] shrink-0 items-center overflow-hidden border-r border-[#d4d4d4]">
            <div className="h-full w-[12px] shrink-0 border-r border-[#e0e0e0]" />
            {lvl ? (
              <>
                <div className="h-full w-[12px] shrink-0 border-r border-[#d0d0d0]" />
                <div className="h-px w-[20px] shrink-0 bg-[#d8d8d8]" />
                <span className="ml-[9px] whitespace-nowrap">{t}</span>
              </>
            ) : (
              <>
                <div className="ml-[4px] flex h-[13px] w-[16px] shrink-0 items-center justify-center rounded-[2px] border border-[#777]">
                  <div className="h-px w-[8px] bg-[#555]" />
                </div>
                <span className="ml-[8px] whitespace-nowrap">{t}</span>
              </>
            )}
          </div>
          <div className="flex w-[79px] shrink-0 items-center justify-center border-r border-[#d4d4d4]">
            <Check state={state} />
          </div>
        </div>
      ))}
    </div>
    <div className="flex min-h-0 flex-1 items-start overflow-hidden pl-[226px] pt-[7px]">
      <div className="flex h-[31px] w-[60px] shrink-0 items-center whitespace-nowrap rounded-[4px] border border-[#d8d8d8] pl-[10px] text-[15px] text-[#444]">恢复默认</div>
    </div>
  </div>
);

const Arrows = () => (
  <svg width="1836" height="958" viewBox="0 0 1836 958" className="pointer-events-none absolute left-0 top-0">
    <polygon points="832,618 545,702 543,698 530,712 547,717 547,711 625,686" fill="#ff2010" />
    <polygon points="874,712 552,746 552,740 537,751 552,757 553,753" fill="#ff2010" />
  </svg>
);

export default function App() {
  return (
    <div className="relative flex h-[958px] w-[1836px] flex-col overflow-hidden bg-white font-['Open_Sans','Noto_Sans_CJK_SC',sans-serif]">
      <TopBar />
      <Ribbon />
      <ComboBar />
      <div className="flex h-[785px] shrink-0 bg-white">
        <NavPanel />
        <div className="w-[6px] shrink-0" />
        <div className="flex h-full w-[349px] shrink-0 flex-col">
          <MemberPanel />
          <div className="h-[6px] shrink-0 bg-[#dfe1e3]" />
          <PropPanel />
        </div>
        <div className="relative w-[5px] shrink-0">
          <div className="absolute left-[1px] top-[330px] h-[125px] w-[3px] bg-[#6d7278]" />
        </div>
        <View3D />
        <div className="relative w-[4px] shrink-0">
          <div className="absolute left-[1px] top-[331px] h-[124px] w-[3px] bg-[#6d7278]" />
        </div>
        <DisplayPanel />
      </div>
      <div className="flex min-h-0 flex-1 items-end bg-[#dcdee0]">
        <div className="ml-[858px] h-px w-[32px] bg-[#999]" />
        <div className="ml-[3px] h-px w-[45px] bg-[#5aa9f0]" />
        <div className="ml-[162px] h-px w-[73px] bg-[#5aa9f0]" />
        <div className="ml-[4px] h-px w-[76px] bg-[#999]" />
      </div>
      <Arrows />
    </div>
  );
}
